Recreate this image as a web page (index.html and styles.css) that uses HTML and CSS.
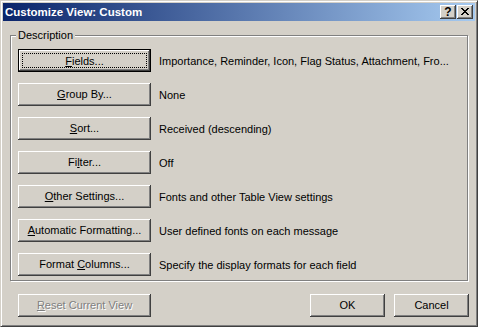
FILE: index.html
```html
<!DOCTYPE html>
<html lang="en">
  <head>
    <meta charset="UTF-8" />
    <title>Customize View: Custom</title>
    <link rel="stylesheet" href="styles.css">
  </head>
  <body>
    <div class="window">
      <div class="titlebar">
        <span class="title">Customize View: Custom</span>
        <div class="caption-buttons">
          <button class="cap-btn help">?</button>
          <button class="cap-btn close">
            <svg width="8" height="7" viewBox="0 0 8 7">
              <path d="M0 0h2v1H0zM6 0h2v1H6zM1 1h2v1H1zM5 1h2v1H5zM2 2h4v1H2zM3 3h2v1H3zM2 4h4v1H2zM1 5h2v1H1zM5 5h2v1H5zM0 6h2v1H0zM6 6h2v1H6z" fill="#000"/>
            </svg>
          </button>
        </div>
      </div>

      <div class="content">
        <div class="group">
          <span class="group-label">Description</span>
          <div class="row">
            <button class="btn btn-wide default"><span class="focus"><span><u>F</u>ields...</span></span></button>
            <span class="value">Importance, Reminder, Icon, Flag Status, Attachment, Fro...</span>
          </div>
          <div class="row">
            <button class="btn btn-wide"><span><u>G</u>roup By...</span></button>
            <span class="value">None</span>
          </div>
          <div class="row">
            <button class="btn btn-wide"><span><u>S</u>ort...</span></button>
            <span class="value">Received (descending)</span>
          </div>
          <div class="row">
            <button class="btn btn-wide"><span>Fi<u>l</u>ter...</span></button>
            <span class="value">Off</span>
          </div>
          <div class="row">
            <button class="btn btn-wide"><span><u>O</u>ther Settings...</span></button>
            <span class="value">Fonts and other Table View settings</span>
          </div>
          <div class="row">
            <button class="btn btn-wide"><span><u>A</u>utomatic Formatting...</span></button>
            <span class="value">User defined fonts on each message</span>
          </div>
          <div class="row">
            <button class="btn btn-wide"><span>Format <u>C</u>olumns...</span></button>
            <span class="value">Specify the display formats for each field</span>
          </div>
        </div>

        <div class="footer">
          <button class="btn btn-wide disabled"><span><u>R</u>eset Current View</span></button>
          <div class="footer-right">
            <button class="btn btn-small"><span>OK</span></button>
            <button class="btn btn-small"><span>Cancel</span></button>
          </div>
        </div>
      </div>
    </div>
  </body>
</html>
```

FILE: styles.css
```css
* {
  margin: 0;
  padding: 0;
  box-sizing: border-box;
}

body {
  font-family: 'Liberation Sans', Arial, sans-serif;
  font-size: 11px;
  color: #000;
  background: #d4d0c8;
}

.window {
  width: 478px;
  height: 327px;
  background: #d4d0c8;
  border: 1px solid;
  border-color: #d4d0c8 #404040 #404040 #d4d0c8;
  box-shadow: inset 1px 1px #fff, inset -1px -1px #808080;
  padding: 2px;
  display: flex;
  flex-direction: column;
}

.titlebar {
  height: 18px;
  display: flex;
  align-items: center;
  justify-content: space-between;
  padding: 0 2px;
  background: linear-gradient(to right, #0a246a, #a6caf0);
}

.title {
  color: #fff;
  font-weight: bold;
  font-size: 11.5px;
}

.caption-buttons {
  display: flex;
  gap: 1px;
}

.cap-btn {
  width: 16px;
  height: 14px;
  background: #d4d0c8;
  border: none;
  box-shadow: inset -1px -1px #404040, inset 1px 1px #fff, inset -2px -2px #808080;
  display: flex;
  align-items: center;
  justify-content: center;
  font-family: 'Liberation Sans', Arial, sans-serif;
  font-weight: bold;
  font-size: 12px;
  line-height: 1;
  padding-bottom: 1px;
}

.close svg {
  display: block;
}

.content {
  flex: 1;
  padding: 14px 6px 0 7px;
  display: flex;
  flex-direction: column;
}

.group {
  position: relative;
  border: 1px solid #808080;
  box-shadow: 1px 1px 0 #fff, inset 1px 1px 0 #fff;
  padding: 13px 7px 4px 7px;
  width: 458px;
  display: flex;
  flex-direction: column;
  gap: 11px;
}

.group-label {
  position: absolute;
  top: -7px;
  left: 5px;
  padding: 0 2px;
  background: #d4d0c8;
  line-height: 13px;
}

.row {
  display: flex;
  align-items: center;
  gap: 8px;
}

.btn {
  height: 23px;
  background: #d4d0c8;
  border: none;
  font-family: inherit;
  font-size: 11px;
  color: #000;
  box-shadow: inset -1px -1px #404040, inset 1px 1px #fff, inset -2px -2px #808080;
  display: flex;
  align-items: center;
  justify-content: center;
  padding-bottom: 1px;
  white-space: nowrap;
}

.btn-wide {
  width: 133px;
}

.btn-small {
  width: 75px;
}

.btn.default {
  border: 1px solid #000;
  padding: 2px;
}

.focus {
  flex: 1;
  align-self: stretch;
  display: flex;
  align-items: center;
  justify-content: center;
  border: 1px dotted #000;
  margin: 1px;
}

.btn.disabled {
  color: #808080;
  text-shadow: 1px 1px 0 #fff;
}

.value {
  white-space: nowrap;
}

.footer {
  display: flex;
  justify-content: space-between;
  margin-top: 13px;
  padding-left: 8px;
}

.footer-right {
  display: flex;
  gap: 9px;
}
```
